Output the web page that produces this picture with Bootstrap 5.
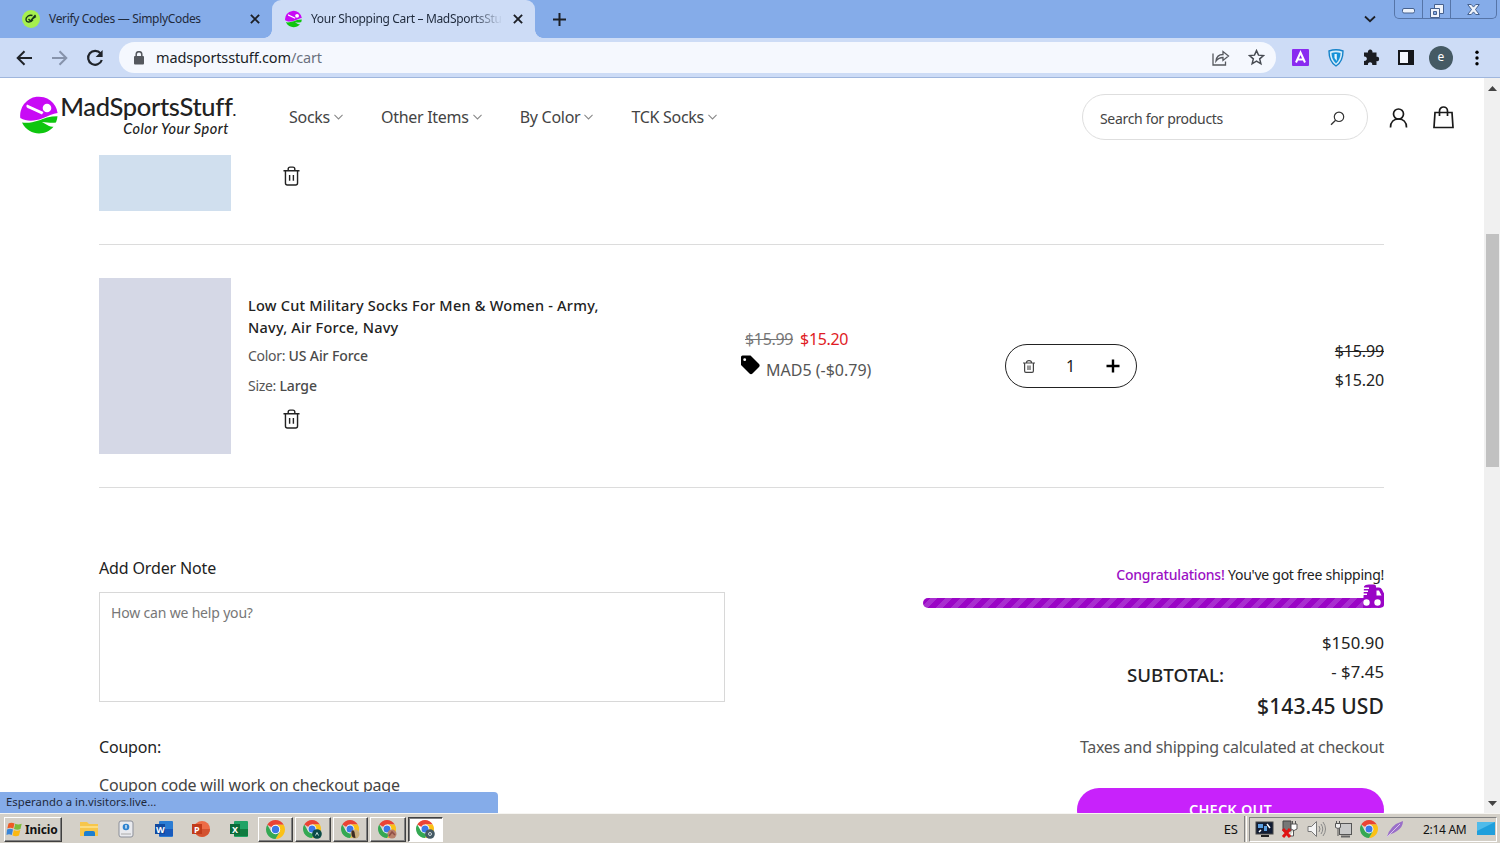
<!DOCTYPE html>
<html lang="en">
<head>
<meta charset="utf-8">
<title>Your Shopping Cart – MadSportsStuff</title>
<link href="https://cdn.jsdelivr.net/npm/bootstrap@5.3.0/dist/css/bootstrap.min.css" rel="stylesheet">
<style>
html,body{height:100%}
body{font-family:"Noto Sans","Open Sans",sans-serif;font-size:16px;line-height:24px;color:#222;overflow:hidden;background:#fff}
svg{display:block;flex:none}
.screen{height:843px;width:1500px}
/* browser chrome */
.tabstrip{height:38px;background:#85ace9;font-size:12px;line-height:16px;letter-spacing:-.33px;color:#1f2a3c}
.tab-idle{width:272px;padding:0 8px 0 22px}
.tab-idle .tab-label{padding-left:9px}
.tab-live{width:263px;background:#cddcf6;border-radius:9px 9px 0 0;padding:0 12px 0 13px;position:relative}
.tab-live::before,.tab-live::after{content:"";position:absolute;bottom:0;width:8px;height:8px}
.tab-live::before{left:-8px;background:radial-gradient(circle at 0 0,transparent 7.5px,#cddcf6 8px)}
.tab-live::after{right:-8px;background:radial-gradient(circle at 100% 0,transparent 7.5px,#cddcf6 8px)}
.tab-title{width:190px;margin-left:9px;white-space:nowrap;overflow:hidden;-webkit-mask-image:linear-gradient(90deg,#000 160px,transparent 192px);mask-image:linear-gradient(90deg,#000 160px,transparent 192px)}
.win-ctl{width:103px;height:19px;border:1px solid #5675a8;border-top:0;border-radius:0 0 5px 5px}
.win-ctl>div+div{border-left:1px solid #5675a8}
.toolbar{height:40px;background:#cddcf6;border-bottom:1px solid #9fb6dd;padding:0 16px}
.address{width:1157px;height:31px;border-radius:16px;background:#f5f8fe;padding:0 11px 0 14px;margin-left:15px}
.url{font-size:14.5px;letter-spacing:-.14px;color:#1b1f27;margin-left:11px;padding-bottom:2px}
.url span{color:#6b7280}
.avatar{width:24px;height:24px;border-radius:50%;background:#455a64;color:#fff;font-size:12px;line-height:22px;text-align:center}
/* store page */
.page{height:735px;width:1484px;overflow:hidden}
.store-head{height:77px;padding:0 30px 0 20px}
.brand-name{font-family:Lato,sans-serif;font-weight:500;font-size:25.5px;line-height:30px;color:#222;letter-spacing:-.35px}
.brand-tag{font-family:Lato,sans-serif;font-style:italic;font-weight:500;font-size:14.5px;line-height:16px;letter-spacing:.5px;color:#222;margin:-4px 7px 0 0}
.menu{margin-left:53px;gap:38px;color:#444;letter-spacing:-.28px}
.menu a{color:inherit;text-decoration:none}
.searchbox{width:286px;height:46px;border:1px solid #dedede;border-radius:23px;padding:0 22px 0 17px;font-size:14px;letter-spacing:-.32px;color:#444}
.cart{width:1285px;margin-left:99px}
.line-item{border-bottom:1px solid #dcdcdc;display:grid;grid-template-columns:149px 492px 265px 132px 1fr}
.prev-item{height:90px}
.this-item{height:243px;padding:33px 0}
.swatch-a{width:132px;height:56px;background:#d0dfee}
.swatch-b{width:132px;height:176px;background:#d5d8e6}
.item-title{font-size:14.500px;font-weight:500;letter-spacing:.23px;line-height:22px;margin-top:16px;width:370px}
.opt{font-size:14px;letter-spacing:-.3px;line-height:22px;color:#555}
.opt b{font-weight:500;color:#4a4a4a;letter-spacing:-.1px}
.bin{margin-left:35px}
.price{margin-top:49px;color:#555}
.price del{color:#777;letter-spacing:-.33px}
.price ins{color:#e01b24;text-decoration:none;letter-spacing:-.33px;margin-left:7px}
.qty{height:44px;border:1px solid #222;border-radius:22px;margin-top:66px;padding:0 16px 0 17px}
.line-total{margin-top:59px;line-height:29px;letter-spacing:-.15px}
.note{width:626px;height:110px;border:1px solid #d8d8d8;padding:8px 11px;font-size:14px;letter-spacing:-.18px;color:#777;margin-top:12px}
.notes{width:626px;padding-top:68px}
.totals{width:461px;padding-top:75px}
.ship{font-size:14px;letter-spacing:-.26px}
.ship b{color:#9b0fc4;font-weight:500;letter-spacing:-.2px}
.ship-bar{height:10px;border-radius:5px;margin-top:11px;position:relative;background:repeating-linear-gradient(135deg,#9a05c6 0 5.3px,#a92ed0 5.3px 10.6px)}
.truck{position:absolute;right:0;top:-14px}
.sub-label{font-size:18.700px;font-weight:500;letter-spacing:.01px;margin:-5px 33px 0 0}
.part{font-size:16.700px;letter-spacing:.05px}
.grand{font-size:21px;font-weight:500;line-height:38px;letter-spacing:.12px}
.tax{color:#555;letter-spacing:-.27px}
.checkout{width:307px;height:44px;border-radius:22px;background:#c822fb;color:#fff;font-size:14.500px;font-weight:600;letter-spacing:.2px;line-height:41px;margin-top:29px;text-align:center;padding:0 0 2px;border:0}
.scroll{width:16px;background:#f0f0f0}
.thumb{width:13px;height:233px;background:#c1c1c1;margin-top:143px}
.status{position:absolute;left:0;bottom:30px;width:498px;height:21px;background:#85ace9;border-top-right-radius:4px;font-size:11.300px;line-height:20px;letter-spacing:.02px;padding-left:6px;color:#1f2a3c}
/* taskbar */
.taskbar{height:30px;background:#d4d0c8;border-top:1px solid #f6f5f2;padding:2px 3px 1px 4px;font-size:12px;line-height:16px;color:#111}
.raised{border:1px solid;border-color:#fff #404040 #404040 #fff;box-shadow:inset -1px -1px #808080}
.start{width:58px;height:25px;font-weight:700;letter-spacing:-.1px;padding-left:1px}
.start span{padding:2px 0 0 2px}
.quick{gap:17.4px;margin-left:17px}
.apps{gap:2px;margin-left:9px}
.apps>div{width:35.5px;height:25px;display:flex;align-items:center;justify-content:center}
.pressed{background:#fff;border:1px solid;border-color:#404040 #fff #fff #404040;box-shadow:inset 1px 1px #808080}
.tray{width:248px;height:25px;border:1px solid;border-color:#808080 #fff #fff #808080;padding-left:5px;margin-left:2px}
.grip{width:3px;height:26px;border-left:1px solid #808080;border-right:1px solid #fff;margin-left:6px}
</style>
</head>
<body>
<svg width="0" height="0" style="position:absolute">
<defs>
<symbol id="chrome" viewBox="0 0 20 20"><path d="M10 10 1.34 5A10 10 0 0 1 18.66 5H10z" fill="#ea4335"/><path d="M18.66 5A10 10 0 0 1 10 20l4.33-7.5L14.33 7.5 10 5z" fill="#fbc116"/><path d="M1.34 5A10 10 0 0 0 10 20l4.33-7.5L10 14.5 5.67 12.5z" fill="#34a853"/><circle cx="10" cy="10" r="4.9" fill="#fff"/><circle cx="10" cy="10" r="3.9" fill="#3b78e7"/></symbol>
<symbol id="bin" viewBox="0 0 18 22"><path d="M.5 5.5h17M2.6 5.5v13q0 2 2 2h8.8q2 0 2-2v-13M5.5 5.3V3.6q0-2 2-2h3q2 0 2 2v1.700M7 10v6M11 10v6" fill="none" stroke="#222" stroke-width="1.500"/></symbol>
<symbol id="ball" viewBox="0 0 38 38"><path d="M.3 22A18.600 18.600 0 0 1 37.600 17C33 17.500 28 20 22 22.500 15 25 7 26 .3 22z" fill="#c80af5"/><path d="M2 26.500C12 28 21 23.500 27 21.500q5-1.300 10.500-1.300-.2 3-1.500 6.300c-5 1-9-.5-14-.5l7 4q2 1 4.500.7C26 40 9 40.500 2 26.500z" fill="#0fc60f"/><path d="M7 8.500c-1.500 2 0 3.500 3 4.500l12 5.500 1.500-2.500z" fill="#fff"/><circle cx="27" cy="12" r="4.300" fill="#fff"/></symbol>
<symbol id="down" viewBox="0 0 8 5"><path d="M.4.6 4 4.200 7.600.6" fill="none" stroke="#888" stroke-width=".9"/></symbol>
<symbol id="x" viewBox="0 0 9 9"><path d="M.8.8l7.400 7.400M8.200.8.8 8.200" stroke="#1c1f26" stroke-width="1.700"/></symbol>
</defs></svg>

<div class="screen d-flex flex-column position-relative">
  <div class="tabstrip d-flex">
    <div class="tab-idle d-flex align-items-center">
      <svg width="18" height="18" viewBox="0 0 18 18"><circle cx="9" cy="9" r="9" fill="#a6f04f"/><path d="M10.500 5.500C7 4.500 3.500 7 4 10s5 2.500 7-.5M6.500 9l2 2L13.500 5M11 8.500l3-2" fill="none" stroke="#16351a" stroke-width="1.400"/></svg>
      <span class="tab-label flex-grow-1">Verify Codes — SimplyCodes</span>
      <svg width="10" height="10" class="me-1"><use href="#x"/></svg>
    </div>
    <div class="tab-live d-flex align-items-center">
      <svg width="17" height="18"><use href="#ball"/></svg>
      <span class="tab-title">Your Shopping Cart – MadSportsStu</span>
      <svg width="10" height="10" class="ms-auto"><use href="#x"/></svg>
    </div>
    <svg class="align-self-center" style="margin-left:18px" width="13" height="13" viewBox="0 0 13 13"><path d="M6.500 0v13M0 6.500h13" stroke="#1c1f26" stroke-width="2"/></svg>
    <svg class="align-self-center ms-auto" style="margin-right:18px" width="12" height="8" viewBox="0 0 12 8"><path d="M1 1.500l5 4.700 5-4.700" fill="none" stroke="#1c1f26" stroke-width="1.800"/></svg>
    <div class="win-ctl d-flex" style="margin-right:3px">
      <div class="d-flex align-items-center justify-content-center pt-1" style="width:27px"><svg width="13" height="6"><rect x=".5" y=".5" width="12" height="4.500" rx="1.500" fill="#eef3fb" stroke="#46618e"/></svg></div>
      <div class="d-flex align-items-center justify-content-center pt-1" style="width:28px"><svg width="14" height="14"><path d="M4.500.5h9v9h-9z" fill="#eef3fb" stroke="#46618e"/><path d="M.5 4.500h9v9h-9z" fill="#eef3fb" stroke="#46618e"/><path d="M3.500 7.500h3v3h-3z" fill="#85ace9" stroke="#46618e"/></svg></div>
      <div class="d-flex align-items-center justify-content-center flex-grow-1"><svg width="13" height="11" viewBox="0 0 13 11"><path d="M.7.5h3.600l2.200 2.600L8.700.5h3.600L8.500 5.500l3.800 5H8.700L6.500 7.900l-2.200 2.600H.7l3.800-5z" fill="#eef3fb" stroke="#46618e"/></svg></div>
    </div>
  </div>

  <div class="toolbar d-flex align-items-center">
    <svg width="17" height="16" viewBox="0 0 17 16"><path d="M16 8H2M8.500 1.200 1.700 8l6.800 6.800" fill="none" stroke="#1f2329" stroke-width="2"/></svg>
    <svg style="margin-left:18px" width="17" height="16" viewBox="0 0 17 16"><path d="M1 8h14M8.500 1.200 15.300 8l-6.800 6.800" fill="none" stroke="#8693ab" stroke-width="2"/></svg>
    <svg style="margin-left:18px" width="18" height="18" viewBox="0 0 18 18"><path d="M14.600 4.400A7 7 0 1 0 15.800 11" fill="none" stroke="#1f2329" stroke-width="2.200"/><path d="M16.600 1v7h-7z" fill="#1f2329"/></svg>
    <div class="address d-flex align-items-center">
      <svg width="12" height="14" viewBox="0 0 12 14"><rect x="1" y="5" width="10" height="8.500" rx="1" fill="#55585e"/><path d="M3.200 6V3.500a2.800 2.800 0 0 1 5.600 0V6" fill="none" stroke="#55585e" stroke-width="1.500"/></svg>
      <div class="url flex-grow-1">madsportsstuff.com<span>/cart</span></div>
      <svg width="18" height="16" viewBox="0 0 18 16"><path d="M1 3.500V15h12.500v-3.500" fill="none" stroke="#55585e" stroke-width="1.300"/><path d="M4 11c.5-4.500 3-6.500 7-6.500V1.500L16.500 6 11 10.500v-3C8 7.500 6 8.500 4 11z" fill="none" stroke="#55585e" stroke-width="1.300"/></svg>
      <svg style="margin-left:18px" width="17" height="17" viewBox="0 0 16 16"><path d="M8 1.500l1.900 4.300 4.700.4-3.600 3.100 1.100 4.600L8 11.400l-4.100 2.500L5 9.300 1.400 6.200l4.700-.4z" fill="none" stroke="#474b52" stroke-width="1.400"/></svg>
    </div>
    <svg class="ms-3" width="17" height="17" viewBox="0 0 17 17"><rect width="17" height="17" rx="1" fill="#8a2bf0"/><path d="M4 13.500 8.500 3.500 13 13.500M5.500 10.500h6" fill="none" stroke="#fff" stroke-width="2"/></svg>
    <svg style="margin-left:19px" width="16" height="18" viewBox="0 0 16 18"><path d="M1 2q7-2.500 14 0c0 7-2 12-7 15C3 14 1 9 1 2z" fill="#d6ecfa" stroke="#1583c9" stroke-width="1.400"/><path d="M3.500 4q4.500-1.500 9 0c0 4-1.500 8-4.500 10.500C5 12 3.500 8 3.500 4z" fill="#1592d8"/><path d="M6.500 5h2.300v7L6.500 9z" fill="#e8f5fd"/></svg>
    <svg style="margin-left:18px" width="18" height="17" viewBox="0 0 18 17"><path d="M2 3.500h4a2.300 2.300 0 1 1 4.400 0h4.100v4.300a2.200 2.200 0 1 1 0 4.300V16h-4.300a2.200 2.200 0 1 0-4.200 0H2v-4.200a2.200 2.200 0 1 0 0-4.200z" fill="#1b1d22"/></svg>
    <svg style="margin-left:18px" width="16" height="15"><rect x="1" y="1" width="14" height="13" fill="#f5f8fe" stroke="#15171b" stroke-width="2"/><path d="M10 1h5v13h-5z" fill="#15171b"/></svg>
    <div class="avatar" style="margin-left:15px">e</div>
    <svg style="margin-left:22px" width="4" height="16"><circle cx="2" cy="2.200" r="1.700"/><circle cx="2" cy="8" r="1.700"/><circle cx="2" cy="13.800" r="1.700"/></svg>
  </div>

  <div class="d-flex">
    <div class="page">
      <header class="store-head d-flex align-items-center">
        <svg class="mb-1" width="38" height="38"><use href="#ball"/></svg>
        <div class="d-flex flex-column align-items-end" style="width:176px;margin:0 0 6px 2px">
          <div class="brand-name text-nowrap">MadSportsStuff<span class="fs-6">.</span></div>
          <div class="brand-tag">Color Your Sport</div>
        </div>
        <nav class="menu d-flex">
          <a class="d-flex align-items-center gap-1" href="#">Socks <svg width="9" height="6"><use href="#down"/></svg></a>
          <a class="d-flex align-items-center gap-1" href="#">Other Items <svg width="9" height="6"><use href="#down"/></svg></a>
          <a class="d-flex align-items-center gap-1" href="#">By Color <svg width="9" height="6"><use href="#down"/></svg></a>
          <a class="d-flex align-items-center gap-1" href="#">TCK Socks <svg width="9" height="6"><use href="#down"/></svg></a>
        </nav>
        <div class="searchbox d-flex align-items-center justify-content-between ms-auto">
          <span class="pt-1">Search for products</span>
          <svg class="mt-1" width="15" height="15" viewBox="0 0 15 15"><circle cx="9" cy="5.800" r="4.700" fill="none" stroke="#333" stroke-width="1.200"/><path d="M5.600 9.200 1 13.800" stroke="#333" stroke-width="1.300"/></svg>
        </div>
        <svg style="margin:2px 0 0 21px" width="19" height="20" viewBox="0 0 19 20"><circle cx="9.500" cy="6" r="5" fill="none" stroke="#1a1a1a" stroke-width="1.700"/><path d="M1.500 19.500c0-5.500 3.500-8.500 8-8.500s8 3 8 8.500" fill="none" stroke="#1a1a1a" stroke-width="1.700"/></svg>
        <svg style="margin:2px 0 0 25px" width="21" height="23" viewBox="0 0 21 23"><path d="M2 6.500h17l1 15H1zM6.500 10V5a4 4 0 0 1 8 0v5" fill="none" stroke="#1a1a1a" stroke-width="1.700"/></svg>
      </header>

      <main class="cart">
        <div class="line-item prev-item">
          <div class="swatch-a"></div>
          <div style="padding-top:10px"><svg class="bin" width="17" height="22"><use href="#bin"/></svg></div>
        </div>
        <div class="line-item this-item">
          <div class="swatch-b"></div>
          <div>
            <div class="item-title">Low Cut Military Socks For Men &amp; Women - Army, Navy, Air Force, Navy</div>
            <div class="opt" style="margin-top:7px">Color: <b>US Air Force</b></div>
            <div class="opt" style="margin-top:8px">Size: <b>Large</b></div>
            <svg class="bin" style="margin-top:11px" width="17" height="22"><use href="#bin"/></svg>
          </div>
          <div class="price">
            <div style="padding-left:5px"><del>$15.99</del><ins>$15.20</ins></div>
            <div class="d-flex">
              <svg style="margin-top:4px" width="20" height="20" viewBox="0 0 20 20"><path d="M2.500.5h8L19 9q1.300 1.500 0 3l-6.500 6.500q-1.500 1.300-3 0L1 10V2q0-1.500 1.500-1.500z" fill="#000"/><circle cx="4.700" cy="4.700" r="1.400" fill="#fff"/></svg>
              <span style="margin:7px 0 0 6px">MAD5 (-$0.79)</span>
            </div>
          </div>
          <div class="qty d-flex align-items-center justify-content-between">
            <svg width="12" height="13" viewBox="0 0 12 13"><path d="M0 3h12M1.600 3v8q0 1.300 1.300 1.300h6.200q1.300 0 1.300-1.300V3M3.500 2.700q0-2 2.500-2t2.500 2" fill="none" stroke="#444" stroke-width="1.200"/><path d="M4 5.500h4v4.500H4z" fill="#999"/></svg>
            <span>1</span>
            <svg width="14" height="14"><path d="M7 .5v13M.5 7h13" stroke="#000" stroke-width="2.400"/></svg>
          </div>
          <div class="line-total text-end"><del>$15.99</del><br>$15.20</div>
        </div>

        <div class="d-flex justify-content-between">
          <section class="notes">
            <div style="letter-spacing:-.15px">Add Order Note</div>
            <div class="note">How can we help you?</div>
            <div style="margin-top:33px;letter-spacing:-.2px">Coupon:</div>
            <div style="margin-top:14px;letter-spacing:-.19px;color:#444">Coupon code will work on checkout page</div>
          </section>
          <section class="totals text-end">
            <div class="ship"><b>Congratulations!</b> You've got free shipping!</div>
            <div class="ship-bar"><svg class="truck" width="23" height="24" viewBox="0 0 23 23"><path d="M3 2Q4 0 8 0h5q2 0 2 2v1H18q2 0 3 2l2 4V20q0 3-3 3H2z" fill="#9a05c6"/><path d="M15.500 6H18l2.500 5h-5zM1 3h7v1.400H1zM0 6h7v1.400H0zM1 9h5v1.400H1z" fill="#fff"/><circle cx="5.500" cy="18" r="3.200" fill="#fff"/><circle cx="16.500" cy="18" r="3.200" fill="#fff"/></svg></div>
            <div class="d-flex align-items-center justify-content-end" style="margin-top:22px">
              <div class="sub-label">SUBTOTAL:</div>
              <div>
                <div class="part" style="line-height:26px">$150.90</div>
                <div class="part" style="line-height:31px">- $7.45</div>
                <div class="grand">$143.45 USD</div>
              </div>
            </div>
            <div class="tax" style="margin-top:10px">Taxes and shipping calculated at checkout</div>
            <button class="checkout btn">CHECK OUT</button>
          </section>
        </div>
      </main>
    </div>
    <div class="scroll d-flex flex-column align-items-center" style="height:735px">
      <svg style="margin-top:8px" width="9" height="5"><path d="M0 5 4.500 0 9 5z" fill="#444"/></svg>
      <div class="thumb"></div>
      <svg class="mt-auto" style="margin-bottom:7px" width="9" height="5"><path d="M0 0h9L4.500 5z" fill="#444"/></svg>
    </div>
  </div>

  <div class="status">Esperando a in.visitors.live...</div>

  <div class="taskbar d-flex align-items-center">
    <div class="start raised d-flex align-items-center">
      <svg width="17" height="17" viewBox="0 0 17 16"><path d="M2.500 2q3-1.500 6 0L7.300 7q-3-1.500-6 0z" fill="#ee5a24"/><path d="M9.200 2.300q3 1.500 6.500 0L14.500 7.500q-3 1.500-6.500 0z" fill="#7cbb3b"/><path d="M1 8q3-1.500 6 0l-1.200 5.500q-3-1.500-5.300 0z" fill="#3a86d8"/><path d="M7.800 8.500q3 1.500 6.500 0l-1.300 5.500q-3 1.500-6.500 0z" fill="#fbb811"/></svg>
      <span>Inicio</span>
    </div>
    <div class="quick d-flex align-items-center">
      <svg width="20" height="18"><path d="M1 2h7l2 2h9v12H1z" fill="#f7c64a"/><path d="M1 6h18v2H1z" fill="#fbdc80"/><path d="M5 16v-3q0-2 2-2h7q2 0 2 2v3z" fill="#1c7fd0"/></svg>
      <svg width="20" height="18"><rect x="3" y="1" width="14" height="16" rx="2" fill="#e9eaee" stroke="#8b8f99"/><circle cx="10" cy="7" r="3.300" fill="#2f83cf"/><path d="M10 5v3.500" stroke="#fff" stroke-width="1.200"/><path d="M5 14h10" stroke="#aaa"/></svg>
      <svg width="20" height="18"><rect x="5" y="1" width="14" height="16" rx="1" fill="#2b7cd3"/><path d="M5 9h14v7H5z" fill="#185abd"/><rect x="1" y="4" width="10" height="10" fill="#124a9f"/><text x="2" y="12.500" font-size="9" font-weight="700" fill="#fff" textLength="8">W</text></svg>
      <svg width="20" height="18"><circle cx="11" cy="9" r="8" fill="#ed6c47"/><path d="M11 9h8a8 8 0 0 1-14 5z" fill="#d35230"/><rect x="1" y="4" width="10" height="10" fill="#c13b1b"/><text x="3" y="12.500" font-size="9" font-weight="700" fill="#fff">P</text></svg>
      <svg width="20" height="18"><rect x="5" y="1" width="14" height="16" rx="1" fill="#21a366"/><path d="M5 9h14v7H5z" fill="#107c41"/><rect x="1" y="4" width="10" height="10" fill="#0b6a38"/><text x="3" y="12.500" font-size="9" font-weight="700" fill="#fff">X</text></svg>
    </div>
    <div class="apps d-flex">
      <div class="raised"><svg width="19" height="19"><use href="#chrome"/></svg></div>
      <div class="raised"><svg width="19" height="19"><use href="#chrome" width="18" height="18"/><circle cx="14" cy="14" r="4.800" fill="#0b4a46"/><path d="M12.500 15.500l1.500-3 1.500 3" fill="none" stroke="#b8d8d4"/></svg></div>
      <div class="raised"><svg width="19" height="19"><use href="#chrome" width="18" height="18"/><circle cx="14" cy="14" r="4.500" fill="#c9ad7a"/><path d="M10.500 11q2-2 3 1l1 6q-4 0-4-4z" fill="#3b2a22"/></svg></div>
      <div class="raised"><svg width="19" height="19"><use href="#chrome" width="18" height="18"/><circle cx="14" cy="14" r="4.500" fill="#b9806a"/><path d="M11 16l3-4 3 3" stroke="#8f4d45" fill="none" stroke-width="1.500"/></svg></div>
      <div class="pressed"><svg width="19" height="19"><use href="#chrome" width="18" height="18"/><circle cx="14" cy="14" r="4.800" fill="#455a64"/><circle cx="14" cy="14" r="1.500" fill="none" stroke="#cfd8dc"/></svg></div>
    </div>
    <div class="ms-auto" style="font-size:13px">ES</div>
    <div class="grip"></div>
    <div class="tray d-flex align-items-center">
      <svg width="19" height="17"><rect x="1" y="1" width="17" height="12" fill="#111c33" stroke="#444"/><path d="M3 3h5v4H3zM9 5h3v5H9z" fill="#5b9fe0"/><path d="M12 3l3 4M6 9l-2 2" stroke="#fff" stroke-width="1.500"/><path d="M6 15h8" stroke="#222" stroke-width="2"/></svg>
      <svg style="margin-left:7px" width="18" height="18"><path d="M2 1h8v10H2z" fill="#777" stroke="#444"/><path d="M10 4h6v5q-3 3-6 0zM11.500 1v3M14.500 1v3M12.500 10v6H9" fill="#fff" stroke="#555"/><path d="M2 9l7 8M9 9l-7 8" stroke="#e01212" stroke-width="3"/></svg>
      <svg style="margin-left:8px" width="19" height="18"><path d="M1 6.500h3.500l5-5v15l-5-5H1z" fill="#f4f4f4" stroke="#777"/><path d="M12 6q2 3 0 6M14 4q3.500 5 0 10M16 2q5 7 0 14" fill="none" stroke="#888"/></svg>
      <svg style="margin-left:8px" width="18" height="18"><rect x="5.500" y="3.500" width="12" height="11" fill="#c9c9c9" stroke="#555"/><path d="M7 16.500h9" stroke="#666" stroke-width="2"/><path d="M1.500 3.500h5v4q-2.500 2-5 0zM2.500 1v3M5.500 1v3M4 9v7" fill="#eee" stroke="#555"/></svg>
      <svg style="margin-left:8px" width="18" height="18"><use href="#chrome"/></svg>
      <svg style="margin-left:8px" width="18" height="18"><path d="M1 17Q4 5 17 1q0 6-6 10-4 3-7.500 3.500z" fill="#9a6fc8"/><path d="M1 17 14 4" stroke="#d8c2ee"/></svg>
      <span style="margin:2px 0 0 19px;letter-spacing:-.3px">2:14 AM</span>
      <svg style="margin-left:11px" width="18" height="14"><rect width="18" height="13" fill="#1f9fdc"/><path d="M0 0h18L0 9z" fill="#4fbbea"/></svg>
    </div>
  </div>
</div>
<script src="https://cdn.jsdelivr.net/npm/bootstrap@5.3.0/dist/js/bootstrap.bundle.min.js"></script>
</body>
</html>
